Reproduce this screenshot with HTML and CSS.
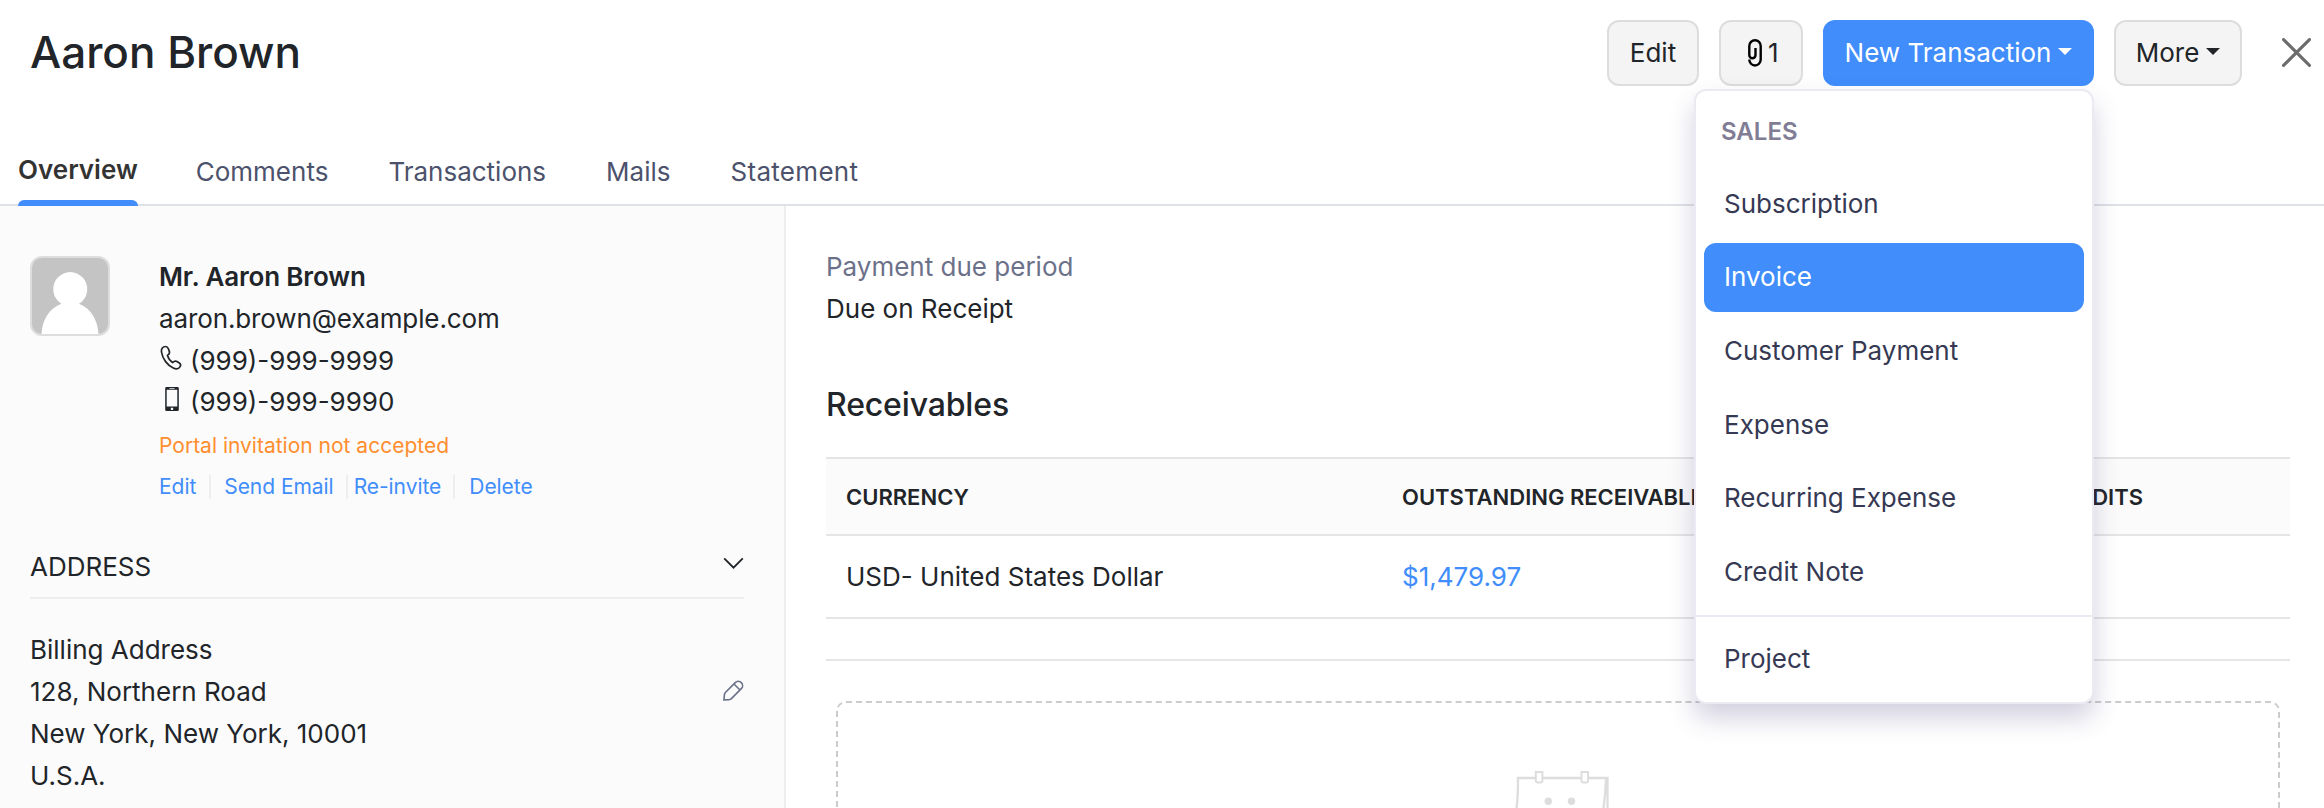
FILE: index.html
```html
<!DOCTYPE html>
<html lang="en">
<head>
<meta charset="utf-8">
<title>Aaron Brown</title>
<link rel="stylesheet" href="styles.css">
</head>
<body>
<header class="header">
  <h1 class="title">Aaron Brown</h1>
  <div class="actions">
    <button class="btn btn-edit">Edit</button>
    <button class="btn btn-attach"><svg class="clip" viewBox="0 0 14 28"><path d="M1.300 20.500a5.700 6 0 0 0 11.400 0V7a5.700 5.800 0 0 0-11.400 0v9a3.100 3.300 0 0 0 6.200 0V9"/></svg><span>1</span></button>
    <div class="dropdown">
      <button class="btn btn-primary">New Transaction<i class="caret"></i></button>
      <div class="menu">
        <div class="menu-title">SALES</div>
        <a class="item">Subscription</a>
        <a class="item active">Invoice</a>
        <a class="item">Customer Payment</a>
        <a class="item">Expense</a>
        <a class="item">Recurring Expense</a>
        <a class="item">Credit Note</a>
        <div class="divider"></div>
        <a class="item">Project</a>
      </div>
    </div>
    <button class="btn btn-more">More<i class="caret"></i></button>
    <svg class="close" viewBox="0 0 28 28"><path d="M1.500 1.500l25 25M26.500 1.500l-25 25"/></svg>
  </div>
</header>
<nav class="tabs">
  <a class="tab current">Overview</a>
  <a class="tab">Comments</a>
  <a class="tab">Transactions</a>
  <a class="tab">Mails</a>
  <a class="tab wide">Statement</a>
</nav>
<div class="content">
  <aside class="side">
    <section class="contact">
      <svg class="avatar" viewBox="0 0 80 80"><rect x="1" y="1" width="78" height="78" rx="11" fill="#c4c4c4" stroke="#ddd" stroke-width="2"/><path d="M11.500 78c1-15 8-26 20-30.300a17 17 0 1 1 17.500 0C60.500 52 67.500 63 68.500 78z" fill="#fff"/></svg>
      <div class="details">
        <div class="name">Mr. Aaron Brown</div>
        <div class="line email">aaron.brown@example.com</div>
        <div class="line"><svg class="ico" viewBox="0 0 25 25"><path d="M2.500 7C2 3.500 4 1.500 6.500 1.500c1.700 0 2.400 1 3 2.500l.9 2.600c.5 1.600-.2 2.600-1.900 3.800C9.300 13.500 11 16 13.600 17.500c1.600-1.400 3-1.700 4.400-.9l2.300 1.400c1.400.9 1.600 2.300.8 3.600-1.300 2.200-4 2.800-6.800 1.500C8.500 20.300 3.500 14 2.500 7z"/></svg><span>(999)-999-9999</span></div>
        <div class="line"><svg class="ico solid" viewBox="0 0 25 25"><path fill-rule="evenodd" d="M7.500 1h11q1.300 0 1.300 1.300v21.400q0 1.300-1.300 1.300h-11q-1.300 0-1.300-1.300V2.300Q6.200 1 7.500 1zM7.700 3.700v16.800h10.600V3.700zM10.500 2v.8h5V2zM13 21.500a1.300 1.300 0 1 0 .01 0z"/></svg><span>(999)-999-9990</span></div>
        <div class="portal">Portal invitation not accepted</div>
        <div class="links"><a class="l1">Edit</a><a class="l2">Send Email</a><a class="l3">Re-invite</a><a class="l4">Delete</a></div>
      </div>
    </section>
    <div class="section-head"><span>ADDRESS</span><svg class="chev" viewBox="0 0 22 14"><path d="M1 1.500l10 10 10-10"/></svg></div>
    <div class="address">
      <div>Billing Address<br>128, Northern Road<br>New York, New York, 10001<br>U.S.A.</div>
      <svg class="pencil" viewBox="0 0 22 22"><path d="M1 20.800l.5-5.500a4 4 0 0 1 1-2.200L12.800 2.700a4.500 4.500 0 0 1 6.400 6.400L8.800 19.500a4 4 0 0 1-2.200 1zM11.500 4.200l6.300 6.300"/></svg>
    </div>
  </aside>
  <main class="main">
    <div class="label">Payment due period</div>
    <div class="value">Due on Receipt</div>
    <h2 class="heading">Receivables</h2>
    <div class="row thead"><span>CURRENCY</span><span>OUTSTANDING RECEIVABLES</span><span class="right">UNUSED CREDITS</span></div>
    <div class="row"><span>USD- United States Dollar</span><a class="amount">$1,479.97</a></div>
    <div class="rule"></div>
    <div class="empty">
      <svg class="calendar" viewBox="0 0 104 38"><path d="M10.500 38c1.300-9 1.500-18 1.500-30h89.500v30M100 9c-.3 10-1.300 20-2.500 29" fill="none" stroke="#ddd" stroke-width="2.300"/><path d="M29.800 2h6.600v8.500a2 2 0 0 1-2 2h-2.600a2 2 0 0 1-2-2zM75.500 2h6.600v8.500a2 2 0 0 1-2 2h-2.600a2 2 0 0 1-2-2z" fill="#fff" stroke="#ddd" stroke-width="2"/><circle cx="42.300" cy="31.300" r="3.700" fill="#ddd"/><circle cx="65.500" cy="31.300" r="3.700" fill="#ddd"/></svg>
    </div>
  </main>
</div>
</body>
</html>
```
FILE: styles.css
```css
* { box-sizing: border-box; }
body { margin: 0; width: 2324px; height: 808px; overflow: hidden; display: flex; flex-direction: column; background: #fff; color: #212529; font: 26px/42px Inter, sans-serif; }
.header { height: 140px; flex: none; display: flex; justify-content: space-between; padding: 20px 13px 0 30px; }
.title { margin: 0; font-size: 44px; font-weight: 500; line-height: 64px; }
.actions { display: flex; align-items: flex-start; }
.btn { height: 66px; margin: 0 20px 0 0; padding: 0; border: 2px solid #ddd; border-radius: 12px; background: #f4f4f4; color: #212529; font: 26px/1 Inter, sans-serif; display: flex; align-items: center; justify-content: center; }
.btn-edit { width: 92px; }
.btn-attach { width: 84px; gap: 6px; justify-content: flex-start; padding-left: 27px; }
.clip { width: 14px; height: 28px; fill: none; stroke: #000; stroke-width: 2.4; }
.dropdown { position: relative; margin-right: 20px; }
.btn-primary { width: 271px; margin: 0; background: #408dfb; border-color: #408dfb; color: #fff; }
.btn-more { width: 128px; margin-right: 40px; }
.caret { margin: -3px 0 0 7px; border: 7px solid transparent; border-top-color: currentColor; border-bottom: 0; }
.close { width: 29px; height: 29px; margin-top: 18px; fill: none; stroke: #6c6c6c; stroke-width: 3; stroke-linecap: round; }
.menu { position: absolute; z-index: 5; right: 0; top: 69px; width: 400px; height: 615px; background: #fff; border: 2px solid #ebeaf2; border-radius: 12px; box-shadow: 0 14px 26px rgba(70,60,120,.24); color: #363953; }
.menu-title { padding: 20px 0 0 25px; height: 78px; font-size: 24px; font-weight: 600; color: #817d95; }
.item { display: flex; align-items: center; height: 69px; margin: 0 8px 4.700px; padding-left: 20px; border-radius: 12px; }
.active { background: #408dfb; color: #fff; }
.divider { height: 2px; margin: 8.500px 0 8px; background: #ebeaf2; }
.tabs { flex: none; height: 66px; display: flex; gap: 60px; padding-left: 18px; border-bottom: 2px solid #dee2e6; color: #4c526c; }
.tab { height: 66px; padding-top: 11px; }
.current { display: flex; flex-direction: column; justify-content: space-between; margin-right: -2px; padding-top: 9px; color: #333; font-weight: 600; }
.current::after { content: ""; height: 6px; background: #408dfb; border-radius: 6px 6px 0 0; }
.wide { letter-spacing: .3px; }
.content { flex: 1; display: flex; min-height: 0; }
.side { width: 786px; flex: none; background: #fbfbfb; border-right: 2px solid #eee; padding: 50px 40px 0 30px; }
.contact { display: flex; gap: 49px; height: 283px; }
.avatar { width: 80px; height: 80px; }
.name { font-weight: 600; height: 42px; letter-spacing: -.15px; }
.line { height: 41.500px; display: flex; gap: 6px; }
.email { letter-spacing: -.12px; }
.ico { width: 25px; height: 25px; margin-top: 5px; fill: none; stroke: #212529; stroke-width: 1.700; }
.solid { fill: #212529; stroke: none; }
.portal { font-size: 21px; color: #ff8e2e; margin-top: 3px; line-height: 39px; height: 40px; }
.links { display: flex; font-size: 21px; color: #408dfb; letter-spacing: -.05px; }
.links a { line-height: 24px; margin-top: 9px; }
.section-head { display: flex; justify-content: space-between; height: 60px; border-bottom: 2px solid #eee; padding-top: 7px; }
.chev { width: 21px; height: 13px; margin-top: 11px; fill: none; stroke: #212529; stroke-width: 2; }
.address { display: flex; justify-content: space-between; padding-top: 30px; }
.pencil { width: 21px; height: 21px; margin-top: 51px; fill: none; stroke: #6c718a; stroke-width: 1.700; }
.l1, .l2, .l3 { border-right: 2px solid #eee; }
.l1 { padding-right: 13px; }
.l2 { padding: 0 12px 0 13px; }
.l3 { padding: 0 12px 0 6px; }
.l4 { padding-left: 14px; }
.main { flex: 1; display: flex; flex-direction: column; padding: 40px 34px 0 40px; }
.label { color: #6c718a; }
.heading { flex: none; margin: 52px 0 27px; font-size: 32px; font-weight: 500; line-height: 46px; height: 48px; letter-spacing: -.15px; }
.row { flex: none; display: grid; grid-template-columns: 556px 1fr 1fr; padding: 0 147px 0 20px; height: 83px; border-bottom: 2px solid #e5e5e5; align-items: center; }
.thead { height: 79px; border-top: 2px solid #e5e5e5; background: #fbfbfb; font-size: 22px; font-weight: 600; }
.right { text-align: right; }
.amount { color: #408dfb; }
.rule { flex: none; height: 42px; border-bottom: 2px solid #e5e5e5; }
.empty { flex: 1; min-height: 0; margin: 40px 10px 0; border: 2px dashed #ccc; border-bottom: 0; border-radius: 10px 10px 0 0; padding-top: 67px; display: flex; justify-content: center; }
.calendar { width: 104px; height: 38px; flex: none; }
```
